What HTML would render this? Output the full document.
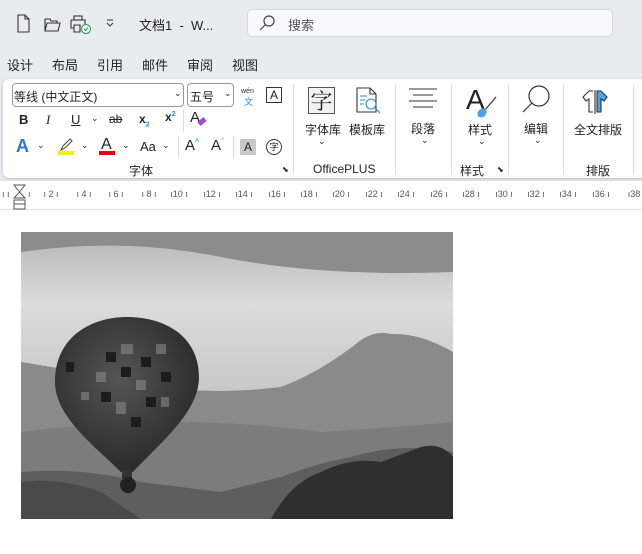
<!DOCTYPE html>
<html><head><meta charset="utf-8"><style>
*{margin:0;padding:0;box-sizing:border-box}
body{width:642px;height:554px;overflow:hidden;background:#fff;font-family:"Liberation Sans","Noto Sans CJK SC",sans-serif;color:#222;position:relative}
.top{position:absolute;left:0;top:0;width:642px;height:181px;background:#e7ecf0}
.abs{position:absolute;white-space:nowrap}
.ribbon{position:absolute;left:3px;top:79px;width:650px;height:99px;background:#fff;border-radius:6px;box-shadow:0 1px 3px rgba(0,0,0,.2)}
.sep{position:absolute;width:1px;background:#dcdcdc}
.t13{font-size:13px}
.t12{font-size:12px}
.ruler{position:absolute;left:0;top:183px;width:642px;height:27px;background:#fff;border-bottom:1px solid #dde2e6}
.rl{position:absolute;top:189px;font-size:9px;color:#555;width:30px;margin-left:-15px;text-align:center}
</style></head><body>
<div class="top"></div>
<svg class="abs" style="left:16px;top:14px" width="100" height="20" viewBox="0 0 100 20" fill="none" stroke="#333" stroke-width="1.1">
<path d="M2 1h7l4 4v13H2z M9 1v4h4"/>
<path d="M29 5v12h13l2-8H31l-2 8 M29 5h5l1 2h6v2"/>
<rect x="58" y="2" width="8" height="4"/><path d="M55 6h14v8h-3 M55 6v8h3 M58 11h6v7h-6z"/>
<circle cx="70" cy="15" r="4.5" fill="#fff" stroke="#2a9d54"/><path d="M68 15l1.5 1.5 2.5-3" stroke="#2a9d54"/>
<path d="M91 9l3 3 3-3 M91 6h6" stroke-width="1"/>
</svg>
<div class="abs t13" style="left:139px;top:15px">文档1 &nbsp;- &nbsp;W...</div>
<div class="abs" style="left:247px;top:9px;width:366px;height:28px;background:#f8f9fa;border:1px solid #d6dadd;border-radius:5px"></div>
<svg class="abs" style="left:259px;top:15px" width="16" height="16" fill="none" stroke="#444" stroke-width="1.2"><circle cx="10" cy="6" r="5"/><path d="M6.5 9.5L1 15"/></svg>
<div class="abs t13" style="left:288px;top:15px;color:#555">搜索</div>
<div class="abs t13" style="left:7px;top:55px">设计</div>
<div class="abs t13" style="left:52px;top:55px">布局</div>
<div class="abs t13" style="left:97px;top:55px">引用</div>
<div class="abs t13" style="left:142px;top:55px">邮件</div>
<div class="abs t13" style="left:187px;top:55px">审阅</div>
<div class="abs t13" style="left:232px;top:55px">视图</div>
<div class="ribbon"></div>
<div class="abs" style="left:12px;top:83px;width:172px;height:24px;border:1px solid #999;border-radius:4px"></div>
<div class="abs t12" style="left:14px;top:88px">等线 (中文正文)</div>
<div class="abs" style="left:174px;top:88px;font-size:9px">⌄</div>
<div class="abs" style="left:187px;top:83px;width:47px;height:24px;border:1px solid #999;border-radius:4px"></div>
<div class="abs t12" style="left:190px;top:88px">五号</div>
<div class="abs" style="left:224px;top:88px;font-size:9px">⌄</div>
<div class="abs" style="left:241px;top:88px;font-size:7px;color:#333">wén</div>
<div class="abs" style="left:244px;top:95px;font-size:9px;color:#2a8ad0">文</div>
<div class="abs" style="left:266px;top:87px;width:16px;height:16px;border:1px solid #333;font-size:12px;text-align:center;line-height:14px">A</div>
<div class="abs" style="left:19px;top:112px;font-size:13px;font-weight:bold">B</div>
<div class="abs" style="left:46px;top:112px;font-size:13px;font-style:italic;font-family:'Liberation Serif',serif">I</div>
<div class="abs" style="left:71px;top:112px;font-size:13px;text-decoration:underline">U</div>
<div class="abs" style="left:91px;top:113px;font-size:9px">⌄</div>
<div class="abs" style="left:109px;top:112px;font-size:12px;text-decoration:line-through">ab</div>
<div class="abs" style="left:139px;top:112px;font-size:12px;font-weight:bold">x<sub style="font-size:7px;color:#2a8ad0">2</sub></div>
<div class="abs" style="left:165px;top:110px;font-size:12px;font-weight:bold">x<sup style="font-size:7px;color:#2a8ad0">2</sup></div>
<div class="sep" style="left:183px;top:110px;height:22px"></div>
<div class="abs" style="left:190px;top:109px;font-size:15px">A</div>
<div class="abs" style="left:198px;top:119px;width:8px;height:5px;background:#a74bc4;transform:rotate(-40deg)"></div>
<div class="abs" style="left:16px;top:136px;font-size:18px;font-weight:bold;color:#2a7ad6">A</div>
<div class="abs" style="left:37px;top:140px;font-size:9px">⌄</div>
<svg class="abs" style="left:58px;top:138px" width="16" height="14" fill="none" stroke="#444"><path d="M3 12l2-4 7-7 2 2-7 7z"/></svg>
<div class="abs" style="left:58px;top:151px;width:16px;height:4px;background:#f5f200"></div>
<div class="abs" style="left:81px;top:140px;font-size:9px">⌄</div>
<div class="abs" style="left:101px;top:136px;font-size:16px">A</div>
<div class="abs" style="left:99px;top:151px;width:16px;height:4px;background:#e00"></div>
<div class="abs" style="left:122px;top:140px;font-size:9px">⌄</div>
<div class="abs" style="left:140px;top:139px;font-size:13px">Aa</div>
<div class="abs" style="left:162px;top:140px;font-size:9px">⌄</div>
<div class="sep" style="left:178px;top:136px;height:22px"></div>
<div class="abs" style="left:185px;top:137px;font-size:15px">A<span style="font-size:9px;color:#2a8ad0;vertical-align:top">^</span></div>
<div class="abs" style="left:211px;top:137px;font-size:15px">A<span style="font-size:9px;color:#2a8ad0;vertical-align:top">ˇ</span></div>
<div class="sep" style="left:233px;top:136px;height:22px"></div>
<div class="abs" style="left:240px;top:139px;width:16px;height:16px;background:#c8c8c8;font-size:12px;text-align:center;line-height:16px">A</div>
<div class="abs" style="left:266px;top:139px;width:16px;height:16px;border:1px solid #333;border-radius:50%;font-size:9px;text-align:center;line-height:14px">字</div>
<div class="abs t12" style="left:129px;top:162px">字体</div>
<div class="abs" style="left:282px;top:165px;font-size:8px">⬊</div>
<div class="sep" style="left:293px;top:84px;height:90px"></div>
<div class="abs" style="left:308px;top:87px;width:27px;height:27px;border:1px solid #555;background:#f2f2f2;font-size:22px;text-align:center;line-height:25px;font-family:'Noto Serif CJK SC',serif">字</div>
<div class="abs t12" style="left:305px;top:121px">字体库</div>
<div class="abs" style="left:318px;top:136px;font-size:9px">⌄</div>
<svg class="abs" style="left:354px;top:86px" width="30" height="30" fill="none" stroke="#333" stroke-width="1.1"><path d="M3 2h13l6 6v18H3z M16 2v6h6"/><path d="M6 10h7 M6 14h5 M6 18h4" stroke="#2a8ad0"/><circle cx="17" cy="18" r="5" stroke="#2a8ad0"/><path d="M21 22l5 5" stroke="#2a8ad0"/></svg>
<div class="abs t12" style="left:349px;top:121px">模板库</div>
<div class="abs t12" style="left:313px;top:162px">OfficePLUS</div>
<div class="sep" style="left:395px;top:84px;height:90px"></div>
<svg class="abs" style="left:408px;top:88px" width="30" height="20" stroke="#333"><path d="M1 1h28M5 7h20M1 13h28M5 19h20"/></svg>
<div class="abs t12" style="left:411px;top:120px">段落</div>
<div class="abs" style="left:421px;top:135px;font-size:9px">⌄</div>
<div class="sep" style="left:451px;top:84px;height:90px"></div>
<div class="abs" style="left:466px;top:84px;font-size:28px;font-weight:300">A</div>
<svg class="abs" style="left:474px;top:95px" width="24" height="24"><path d="M22 2L10 16" stroke="#333" stroke-width="1.2"/><ellipse cx="8" cy="18" rx="5" ry="4" fill="#4fa3e0" transform="rotate(-40 8 18)"/></svg>
<div class="abs t12" style="left:468px;top:121px">样式</div>
<div class="abs" style="left:478px;top:136px;font-size:9px">⌄</div>
<div class="abs t12" style="left:460px;top:162px">样式</div>
<div class="abs" style="left:497px;top:165px;font-size:8px">⬊</div>
<div class="sep" style="left:508px;top:84px;height:90px"></div>
<svg class="abs" style="left:521px;top:84px" width="32" height="30" fill="none" stroke="#333" stroke-width="1.2"><circle cx="18" cy="12" r="10"/><path d="M11 19L2 28"/></svg>
<div class="abs t12" style="left:524px;top:120px">编辑</div>
<div class="abs" style="left:534px;top:135px;font-size:9px">⌄</div>
<div class="sep" style="left:563px;top:84px;height:90px"></div>
<svg class="abs" style="left:581px;top:88px" width="34" height="26" stroke="#333" stroke-width="1.1"><path d="M14 2v24" /><path d="M12 3h-4l-6 6 3 4 3-2v13h4" fill="none"/><path d="M16 3h4l6 6-3 4-3-2v13h-4z" fill="#4fa3e0"/></svg>
<div class="abs t12" style="left:574px;top:121px">全文排版</div>
<div class="abs t12" style="left:586px;top:162px">排版</div>
<div class="sep" style="left:633px;top:84px;height:90px"></div>
<div class="ruler"></div>
<svg class="abs" style="left:12px;top:184px" width="16" height="27" fill="#fff" stroke="#555"><path d="M2 1h11L7.5 8z M2 14h11L7.5 8z"/><rect x="2" y="16" width="11" height="9"/><path d="M2 20h11"/></svg>
<div class="abs" style="left:2px;top:189px;font-size:9px;color:#555">ı ı</div>
<div class="abs" style="left:28px;top:189px;font-size:9px;color:#555">ı</div>
<div class="rl" style="left:51px">ı 2 ı</div>
<div class="rl" style="left:84px">ı 4 ı</div>
<div class="rl" style="left:116px">ı 6 ı</div>
<div class="rl" style="left:149px">ı 8 ı</div>
<div class="rl" style="left:179px">ı10 ı</div>
<div class="rl" style="left:212px">ı12 ı</div>
<div class="rl" style="left:244px">ı14 ı</div>
<div class="rl" style="left:277px">ı16 ı</div>
<div class="rl" style="left:309px">ı18 ı</div>
<div class="rl" style="left:341px">ı20 ı</div>
<div class="rl" style="left:374px">ı22 ı</div>
<div class="rl" style="left:406px">ı24 ı</div>
<div class="rl" style="left:439px">ı26 ı</div>
<div class="rl" style="left:471px">ı28 ı</div>
<div class="rl" style="left:504px">ı30 ı</div>
<div class="rl" style="left:536px">ı32 ı</div>
<div class="rl" style="left:568px">ı34 ı</div>
<div class="rl" style="left:601px">ı36 ı</div>
<div class="rl" style="left:634px">ı38</div>
<svg class="abs" style="left:21px;top:232px" width="432" height="287" viewBox="0 0 432 287">
<defs>
<linearGradient id="sky" x1="0" y1="0" x2="0" y2="1"><stop offset="0" stop-color="#8c8c8c"/><stop offset="1" stop-color="#888"/></linearGradient>
<linearGradient id="cl" x1="0" y1="0" x2="0" y2="1"><stop offset="0" stop-color="#bdbdbd"/><stop offset=".4" stop-color="#dcdcdc"/><stop offset="1" stop-color="#c8c8c8"/></linearGradient>
<radialGradient id="bal" cx=".45" cy=".4" r=".6"><stop offset="0" stop-color="#555"/><stop offset="1" stop-color="#2a2a2a"/></radialGradient>
</defs>
<rect width="432" height="287" fill="url(#sky)"/>
<path d="M0 20 Q100 5 200 25 Q300 45 432 40 L432 120 Q380 90 340 110 Q300 140 260 155 Q180 165 120 150 Q60 140 0 130 Z" fill="url(#cl)"/>
<path d="M0 130 Q60 140 120 150 Q180 165 260 155 Q300 140 340 108 Q355 98 370 102 Q400 112 432 125 L432 287 L0 287 Z" fill="#8a8a8a"/>
<path d="M0 200 Q150 180 300 200 Q380 195 432 190 L432 287 L0 287 Z" fill="#7c7c7c"/>
<path d="M0 240 Q60 235 120 250 L200 260 L260 245 Q300 230 330 225 Q380 210 432 220 L432 287 L0 287 Z" fill="#5e5e5e"/>
<path d="M250 287 Q270 250 300 240 Q330 225 360 230 L400 215 Q420 210 432 225 L432 287 Z" fill="#2f2f2f"/>
<path d="M0 250 Q40 245 80 260 L120 287 L0 287Z" fill="#4a4a4a"/>
<path d="M106 85 C70 85 34 105 34 150 C34 185 75 215 100 240 L112 240 C140 210 178 180 178 145 C178 105 145 85 106 85Z" fill="url(#bal)"/>
<g fill="#888" opacity=".6"><rect x="100" y="112" width="12" height="10"/><rect x="135" y="112" width="10" height="10"/><rect x="75" y="140" width="10" height="10"/><rect x="115" y="148" width="10" height="10"/><rect x="95" y="170" width="10" height="12"/><rect x="140" y="165" width="8" height="10"/><rect x="60" y="160" width="8" height="8"/></g>
<g fill="#1c1c1c"><rect x="85" y="120" width="10" height="10"/><rect x="120" y="125" width="10" height="10"/><rect x="100" y="135" width="10" height="10"/><rect x="140" y="140" width="10" height="10"/><rect x="80" y="160" width="10" height="10"/><rect x="125" y="165" width="10" height="10"/><rect x="45" y="130" width="8" height="10"/><rect x="110" y="185" width="10" height="10"/></g>
<rect x="101" y="238" width="10" height="8" fill="#333"/>
<ellipse cx="107" cy="253" rx="8" ry="8" fill="#222"/>
</svg>
</body></html>
